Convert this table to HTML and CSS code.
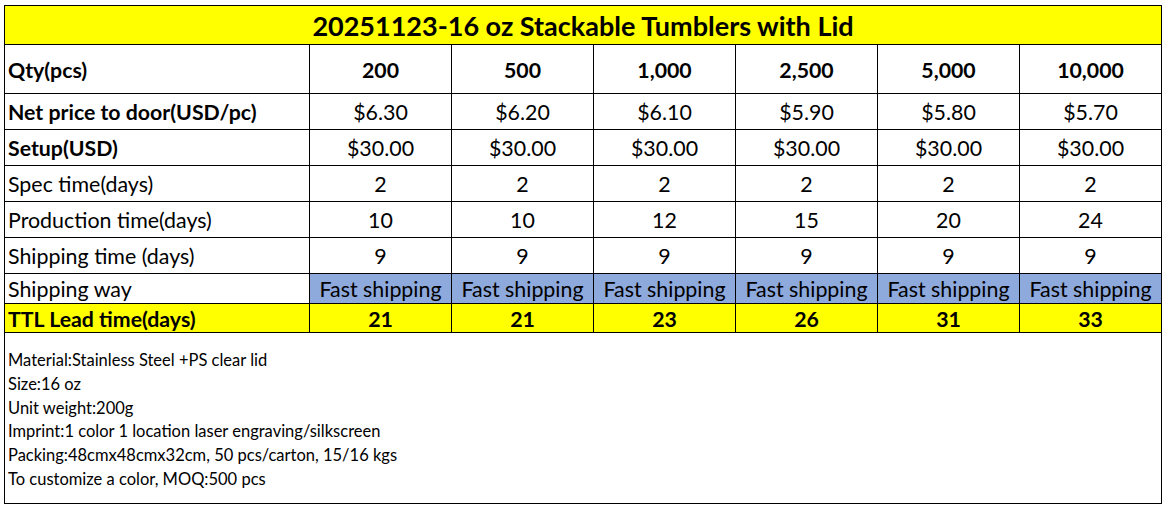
FILE: index.html
```html
<!DOCTYPE html>
<html lang="en">
<head>
<meta charset="utf-8">
<title>16 oz Stackable Tumblers with Lid</title>
<link rel="stylesheet" href="styles.css">
</head>
<body>
<div class="sheet">
  <div class="cell title">20251123-16 oz Stackable Tumblers with Lid</div>

  <div class="cell label bold">Qty(pcs)</div>
  <div class="cell val bold">200</div>
  <div class="cell val bold">500</div>
  <div class="cell val bold">1,000</div>
  <div class="cell val bold">2,500</div>
  <div class="cell val bold">5,000</div>
  <div class="cell val bold">10,000</div>

  <div class="cell label bold">Net price to door(USD/pc)</div>
  <div class="cell val">$6.30</div>
  <div class="cell val">$6.20</div>
  <div class="cell val">$6.10</div>
  <div class="cell val">$5.90</div>
  <div class="cell val">$5.80</div>
  <div class="cell val">$5.70</div>

  <div class="cell label bold">Setup(USD)</div>
  <div class="cell val">$30.00</div>
  <div class="cell val">$30.00</div>
  <div class="cell val">$30.00</div>
  <div class="cell val">$30.00</div>
  <div class="cell val">$30.00</div>
  <div class="cell val">$30.00</div>

  <div class="cell label">Spec time(days)</div>
  <div class="cell val">2</div>
  <div class="cell val">2</div>
  <div class="cell val">2</div>
  <div class="cell val">2</div>
  <div class="cell val">2</div>
  <div class="cell val">2</div>

  <div class="cell label">Production time(days)</div>
  <div class="cell val">10</div>
  <div class="cell val">10</div>
  <div class="cell val">12</div>
  <div class="cell val">15</div>
  <div class="cell val">20</div>
  <div class="cell val">24</div>

  <div class="cell label">Shipping time (days)</div>
  <div class="cell val">9</div>
  <div class="cell val">9</div>
  <div class="cell val">9</div>
  <div class="cell val">9</div>
  <div class="cell val">9</div>
  <div class="cell val">9</div>

  <div class="cell label">Shipping way</div>
  <div class="cell val blue">Fast shipping</div>
  <div class="cell val blue">Fast shipping</div>
  <div class="cell val blue">Fast shipping</div>
  <div class="cell val blue">Fast shipping</div>
  <div class="cell val blue">Fast shipping</div>
  <div class="cell val blue">Fast shipping</div>

  <div class="cell label bold yellow">TTL Lead time(days)</div>
  <div class="cell val bold yellow">21</div>
  <div class="cell val bold yellow">21</div>
  <div class="cell val bold yellow">23</div>
  <div class="cell val bold yellow">26</div>
  <div class="cell val bold yellow">31</div>
  <div class="cell val bold yellow">33</div>

  <div class="cell notes">
    <p>Material:Stainless Steel +PS clear lid</p>
    <p>Size:16 oz</p>
    <p>Unit weight:200g</p>
    <p>Imprint:1 color 1 location laser engraving/silkscreen</p>
    <p>Packing:48cmx48cmx32cm, 50 pcs/carton, 15/16 kgs</p>
    <p>To customize a color, MOQ:500 pcs</p>
  </div>
</div>
</body>
</html>
```

FILE: styles.css
```css
html, body {
  margin: 0;
  padding: 0;
  background: #ffffff;
}

body {
  padding: 5px 0 0 4px;
  font-family: "Lato", "Open Sans", sans-serif;
  color: #000000;
}

.sheet {
  display: grid;
  grid-template-columns: 305px repeat(6, 142px);
  grid-template-rows: 39px 49px 36px 36px 36px 36px 36px 30px 29px 171px;
  width: max-content;
  border-left: 1px solid #000;
  border-top: 1px solid #000;
}

.cell {
  box-sizing: border-box;
  border-right: 1px solid #000;
  border-bottom: 1px solid #000;
  display: flex;
  align-items: center;
  padding-top: 1px;
  font-size: 21.4px;
  white-space: nowrap;
  overflow: hidden;
}

.title {
  grid-column: 1 / -1;
  justify-content: center;
  background: #ffff00;
  font-weight: 700;
  font-size: 27px;
}

.label {
  padding-left: 3px;
}

.val {
  justify-content: center;
}

.bold {
  font-weight: 700;
  font-size: 21.3px;
}

.blue {
  background: #8ea9db;
}

.yellow {
  background: #ffff00;
}

.notes {
  grid-column: 1 / -1;
  display: block;
  padding: 16px 0 0 3px;
  font-size: 16.5px;
  line-height: 23.8px;
}

.notes p {
  margin: 0;
}
```
